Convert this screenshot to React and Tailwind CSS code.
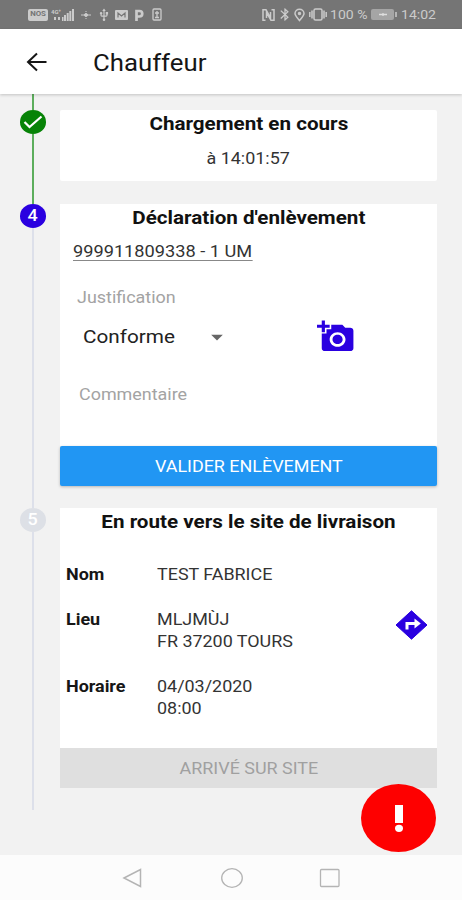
import { MdAddAPhoto, MdArrowDropDown, MdBluetooth, MdUsb } from "react-icons/md";

function Text({ className = "", scale = "scale-x-[1.12]", children }) {
  return <span className={`inline-block whitespace-nowrap ${scale} ${className}`}>{children}</span>;
}

function StatusBar() {
  return (
    <div className="flex h-[29px] shrink-0 items-center bg-[#757575] pl-7 pr-6 text-[#cbcbcb]">
      <span className="flex h-3 w-5 items-center justify-center rounded-[2px] bg-[#cbcbcb] text-[7px] font-bold text-[#757575]">
        <Text>NOS</Text>
      </span>
      <svg className="ml-[3px] h-3 w-6" viewBox="0 0 24 12" fill="currentColor">
        <text x="0" y="5" fontSize="6" fontWeight="700">4G⁺</text>
        <path d="M3 8h2v3H3zM7 8h2v3H7zM11 8h1.500v4H11zM13 6h2v6h-2zM15.700 4h2v8h-2zM18.300 2h2v10h-2zM21 0h2v12h-2z" />
      </svg>
      <svg className="ml-[5px] h-3 w-3" viewBox="0 0 12 12" stroke="currentColor" fill="currentColor">
        <path d="M1 6h10M6 2v1M6 9v1" />
        <circle cx="6" cy="6" r="1.500" />
      </svg>
      <MdUsb className="ml-[5px] h-[14px] w-[14px]" />
      <svg className="ml-[4px] h-[10px] w-[13px]" viewBox="0 0 13 10">
        <rect width="13" height="10" rx="1" fill="currentColor" />
        <path d="M3 7.500V3l3.500 3L10 3v4.500" fill="none" stroke="#757575" strokeWidth="1.200" />
      </svg>
      <svg className="ml-[6px] h-3 w-[10px]" viewBox="0 0 10 12" fill="none" stroke="currentColor" strokeWidth="2.700">
        <path d="M2.500 12V2h3a2.600 2.600 0 0 1 0 5.500h-3" />
      </svg>
      <svg className="ml-[8px] h-[13px] w-[10px]" viewBox="0 0 10 13" fill="none" stroke="currentColor" strokeWidth="1.300">
        <rect x="1" y="1" width="8" height="11" rx="1" />
        <path d="M5 3v6M3 5h4M3 9.500h4" />
      </svg>
      <div className="ml-auto flex items-center">
        <svg className="h-[12px] w-[13px]" viewBox="0 0 13 12" fill="none" stroke="currentColor" strokeWidth="1.500">
          <path d="M3.500 11.200H1V.800h3l4.500 8V3M9.500.800H12v10.400H9L4.500 3.500V9" />
        </svg>
        <MdBluetooth preserveAspectRatio="none" className="ml-[2px] h-[15px] w-[16px]" />
        <svg className="ml-[1px] h-[14px] w-[11px]" viewBox="0 0 11 14" fill="none" stroke="currentColor" strokeWidth="1.500">
          <path d="M5.500 12.500C3 9.500 1 7.500 1 5.500a4.500 4.300 0 0 1 9 0c0 2-2 4-4.500 7z" />
          <circle cx="5.500" cy="5.500" r="1" fill="currentColor" />
        </svg>
        <svg className="ml-[4px] h-[13px] w-[18px]" viewBox="0 0 18 13" fill="none" stroke="currentColor" strokeWidth="1.500">
          <rect x="5" y="1" width="8" height="11" rx="1.500" />
          <path d="M3 2.500v8M15 2.500v8M.800 4v5M17.200 4v5" />
        </svg>
        <span className="ml-[3px] w-[41px] text-[13px] leading-none"><Text className="origin-left" scale="scale-x-[1.08]">100 %</Text></span>
        <svg className="h-[11px] w-[26px]" viewBox="0 0 26 11">
          <rect width="23" height="11" rx="2" fill="#a5a5a5" />
          <rect x="24" y="3" width="2" height="5" fill="#b5b5b5" />
          <path d="M8 5.500h8M12 4v3" stroke="#dedede" strokeWidth="1.300" />
        </svg>
        <span className="ml-1 w-[37px] text-[13px] leading-none"><Text className="origin-left" scale="scale-x-[1.08]">14:02</Text></span>
      </div>
    </div>
  );
}

function Step({ marker, lead, markerClass, lineClass, gap, children }) {
  return (
    <section className="flex">
      <div className="flex w-[60px] shrink-0 flex-col items-center pl-[6px]">
        {lead}
        <div className={`flex h-[23.500px] w-[26px] shrink-0 items-center justify-center rounded-[50%] text-white ${markerClass}`}>{marker}</div>
        <div className={`w-[2px] flex-1 ${lineClass}`} />
      </div>
      <div className={`w-[377px] ${gap}`}>{children}</div>
    </section>
  );
}

function Title({ children }) {
  return (
    <h2 className="flex h-[26px] items-center justify-center text-[18px] font-bold text-[#111]">
      <Text scale="scale-x-[1.145]">{children}</Text>
    </h2>
  );
}

function Row({ label, lines, className, children }) {
  return (
    <div className={`flex pl-[6px] text-[16px] leading-[22px] ${className}`}>
      <div className="w-[91px] font-bold text-[#161616]"><Text className="origin-left">{label}</Text></div>
      <div className="flex flex-1 flex-col text-[#333]">
        {lines.map((line) => <Text key={line} className="origin-left">{line}</Text>)}
      </div>
      {children}
    </div>
  );
}

export default function App() {
  return (
    <div className="flex h-[900px] w-[462px] flex-col overflow-hidden bg-[#f2f2f2] font-[Roboto,sans-serif]">
      <StatusBar />
      <header className="z-10 flex h-[65px] shrink-0 items-center bg-white pl-[26px] text-[#161616] shadow-[0_1px_3px_rgba(0,0,0,0.2)]">
        <svg className="h-[20px] w-[21px]" viewBox="0 0 21 20" fill="none" stroke="currentColor" strokeWidth="2">
          <path d="M20.500 10H2M11 1.500L2 10l9 8.500" />
        </svg>
        <Text className="ml-[46px] origin-left pt-[5px] text-[23px]">Chauffeur</Text>
      </header>

      <main className="relative flex-1">
        <Step
          lead={<div className="h-4 w-[2px] bg-[#5dae5d]" />}
          marker={
            <svg className="h-[16px] w-[20px]" viewBox="0 0 20 16" fill="none" stroke="white" strokeWidth="2.200">
              <path d="M1.500 8l5 5L18.500 2.500" />
            </svg>
          }
          markerClass="bg-[#078307]"
          lineClass="bg-[#5dae5d]"
          gap="pt-4 pb-[23px]"
        >
          <div className="h-[71px] rounded-[2px] bg-white">
            <Title>Chargement en cours</Title>
            <p className="flex h-[45px] items-center justify-center text-[16px] text-[#333]"><Text>à 14:01:57</Text></p>
          </div>
        </Step>

        <Step
          marker={<Text className="text-[16px] font-medium leading-none">4</Text>}
          markerClass="bg-[#2a00e0]"
          lineClass="bg-[#dde0ea]"
          gap="pb-[22px]"
        >
          <div className="h-[242px] bg-white">
            <Title>Déclaration d'enlèvement</Title>
            <p className="flex h-[43px] items-center pl-[13px] text-[16px] text-[#333]">
              <Text className="origin-left border-b border-[#888] leading-[17px]" scale="scale-x-[1.137]">999911809338 - 1 UM</Text>
            </p>
            <div className="flex">
              <div className="w-[257px]">
                <p className="flex h-[50px] items-center pl-[17px] text-[16px] text-[#a3a3a3]"><Text className="origin-left">Justification</Text></p>
                <div className="flex h-[28px] items-center pl-[23px] text-[19px] text-[#222]">
                  <span className="w-[120px]"><Text className="origin-left" scale="scale-x-[1.09]">Conforme</Text></span>
                  <MdArrowDropDown preserveAspectRatio="none" className="h-[28px] w-[28px] text-[#666]" />
                </div>
              </div>
              <MdAddAPhoto preserveAspectRatio="none" className="mt-[46px] h-[35px] w-[38px] text-[#2a00e0]" />
            </div>
            <p className="mt-[24px] flex h-[34px] items-center pl-[19px] text-[16px] text-[#a3a3a3]"><Text className="origin-left">Commentaire</Text></p>
          </div>
          <button className="flex h-[40px] w-full items-center justify-center rounded-[2px] bg-[#2196f3] pt-[2px] text-[16px] text-white shadow-[0_1px_3px_rgba(0,0,0,0.25)]">
            <Text>VALIDER ENLÈVEMENT</Text>
          </button>
        </Step>

        <Step
          marker={<Text className="text-[16px] font-medium leading-none">5</Text>}
          markerClass="bg-[#dde0e6]"
          lineClass="bg-[#dde0ea]"
          gap="pb-[22px]"
        >
          <div className="h-[240px] bg-white">
            <Title>En route vers le site de livraison</Title>
            <Row label="Nom" lines={["TEST FABRICE"]} className="pt-[30px]" />
            <Row label="Lieu" lines={["MLJMÙJ", "FR 37200 TOURS"]} className="pt-[23px]">
              <svg className="mt-[1px] mr-[9px] h-[30px] w-[33px]" viewBox="0 0 33 30">
                <path d="M16.500.800L32 15 16.500 29.200 1 15z" fill="#2a00e0" stroke="#2a00e0" strokeLinejoin="round" />
                <path d="M12 19.500v-6h10" fill="none" stroke="white" strokeWidth="3" />
                <path d="M19.500 8.500l6.300 5-6.300 5z" fill="white" />
              </svg>
            </Row>
            <Row label="Horaire" lines={["04/03/2020", "08:00"]} className="pt-[23px]" />
          </div>
          <button className="flex h-[40px] w-full items-center justify-center bg-[#dfdfdf] pt-[2px] text-[16px] text-[#a0a0a0]">
            <Text>ARRIVÉ SUR SITE</Text>
          </button>
        </Step>

        <button className="absolute right-[26px] bottom-[3px] flex h-[68px] w-[75px] items-center justify-center rounded-[50%] bg-[#fe0000]">
          <svg className="h-[27px] w-[8px]" viewBox="0 0 8 27" fill="white">
            <path d="M0 0h8v18H0z" />
            <ellipse cx="4" cy="23.300" rx="4" ry="3.600" />
          </svg>
        </button>
      </main>

      <nav className="flex h-[45px] shrink-0 items-center bg-[#fcfcfc] pl-[122px] text-[#b4b4b4]">
        <svg className="h-[22px] w-[22px]" viewBox="0 0 22 22" fill="none" stroke="currentColor" strokeWidth="1.500">
          <path d="M2 11L18.500 2.500v17z" />
        </svg>
        <svg className="ml-[76px] h-[22px] w-[24px]" viewBox="0 0 24 22" fill="none" stroke="currentColor" strokeWidth="1.300">
          <ellipse cx="12" cy="11" rx="10.300" ry="9.300" />
        </svg>
        <svg className="ml-[75px] h-[20px] w-[22px]" viewBox="0 0 22 20" fill="none" stroke="currentColor" strokeWidth="1.300">
          <rect x="1.500" y="1.500" width="18.500" height="17" rx="1" />
        </svg>
      </nav>
    </div>
  );
}
